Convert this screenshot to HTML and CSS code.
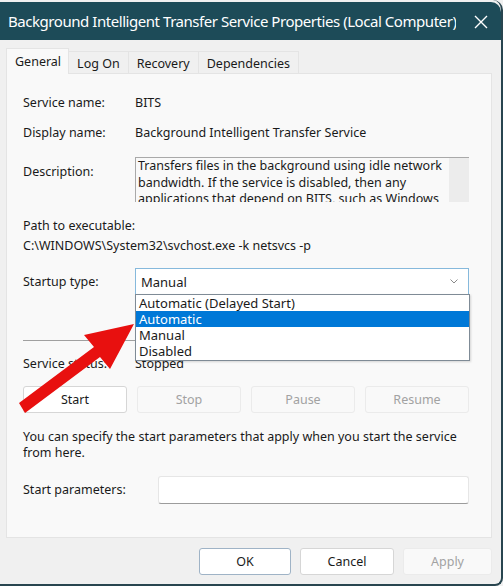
FILE: index.html
```html
<!DOCTYPE html>
<html lang="en">
<head>
    <meta charset="UTF-8">
    <title>Background Intelligent Transfer Service Properties</title>
    <link rel="stylesheet" href="styles.css">
</head>
<body>
    <div class="window">
        <div class="titlebar">
            <span class="title">Background Intelligent Transfer Service Properties (Local Computer)</span>
            <svg class="close" width="14" height="14" viewBox="0 0 14 14">
                <path d="M1 1 L13 13 M13 1 L1 13" stroke="#fff" stroke-width="1.4" fill="none"/>
            </svg>
        </div>

        <div class="content">
            <div class="tabs">
                <div class="tab active">General</div>
                <div class="tab">Log On</div>
                <div class="tab">Recovery</div>
                <div class="tab">Dependencies</div>
            </div>

            <div class="panel">
                <div class="field">
                    <span>Service name:</span>
                    <span>BITS</span>
                </div>
                <div class="field gap-14">
                    <span>Display name:</span>
                    <span>Background Intelligent Transfer Service</span>
                </div>
                <div class="field field-desc">
                    <span class="desc-label">Description:</span>
                    <div class="desc">
                        <div class="desc-text">Transfers files in the background using idle network<br>bandwidth. If the service is disabled, then any<br>applications that depend on BITS, such as Windows</div>
                        <div class="desc-scroll"></div>
                    </div>
                </div>
                <div class="path-label">Path to executable:</div>
                <div class="path-value">C:\WINDOWS\System32\svchost.exe -k netsvcs -p</div>

                <div class="field field-startup">
                    <span>Startup type:</span>
                    <div class="select">
                        <span>Manual</span>
                        <svg class="chevron" width="8" height="5" viewBox="0 0 8 5">
                            <path d="M0.5 0.5 L4 4 L7.5 0.5" stroke="#8a8a8a" stroke-width="1" fill="none"/>
                        </svg>
                        <ul class="options">
                            <li>Automatic (Delayed Start)</li>
                            <li class="selected">Automatic</li>
                            <li>Manual</li>
                            <li>Disabled</li>
                        </ul>
                    </div>
                </div>

                <div class="separator"></div>

                <div class="field gap-15">
                    <span>Service status:</span>
                    <span>Stopped</span>
                </div>

                <div class="service-buttons">
                    <button class="btn">Start</button>
                    <button class="btn" disabled>Stop</button>
                    <button class="btn" disabled>Pause</button>
                    <button class="btn" disabled>Resume</button>
                </div>

                <p class="hint">You can specify the start parameters that apply when you start the service<br>from here.</p>

                <div class="field field-params">
                    <span>Start parameters:</span>
                    <div class="text-input"></div>
                </div>
            </div>

            <div class="footer">
                <button class="btn btn-ok">OK</button>
                <button class="btn btn-cancel">Cancel</button>
                <button class="btn btn-apply" disabled>Apply</button>
            </div>
        </div>

        <svg class="arrow" width="503" height="586" viewBox="0 0 503 586">
            <polygon points="19,403 94,347 84,335 134,324 110,369 100,357 25,413" fill="#e8100f"/>
        </svg>
    </div>
</body>
</html>
```

FILE: styles.css
```css
:root {
    --title-color: #1d4b58;
    --window-bg: #f0f0f0;
    --panel-bg: #f9f9f9;
    --border-light: #e0e0e0;
    --highlight: #0078d7;
    --disabled-text: #a2a2a2;
}

body {
    margin: 0;
    background-color: var(--window-bg);
    font-family: 'Noto Sans', sans-serif;
    font-size: 12.5px;
    color: #1a1a1a;
}

.window {
    position: relative;
    width: 503px;
    height: 586px;
    box-sizing: border-box;
    padding-top: 2px;
    background-color: var(--window-bg);
    border-right: 2px solid #28454f;
    border-bottom: 2px solid #28454f;
    border-radius: 0 10px 8px 0;
    overflow: hidden;
}

.titlebar {
    height: 38px;
    display: flex;
    align-items: center;
    justify-content: space-between;
    padding: 0 13px 0 8px;
    background-color: var(--title-color);
    color: white;
    border-radius: 0 10px 0 0;
}

.title {
    min-width: 0;
    font-size: 15px;
    letter-spacing: -0.45px;
    white-space: nowrap;
    overflow: hidden;
}

.close {
    flex-shrink: 0;
    margin-top: 1px;
}

.content {
    padding: 8px 9px 0 6px;
}

.tabs {
    display: flex;
    align-items: flex-end;
    height: 25px;
}

.tab {
    height: 22px;
    box-sizing: border-box;
    padding: 2px 8px 0;
    display: flex;
    align-items: center;
    border: 1px solid #e4e4e4;
    border-bottom: none;
    border-left: none;
}

.tab.active {
    height: 26px;
    margin-bottom: -1px;
    padding: 0 7px 0 8px;
    background-color: var(--panel-bg);
    border-left: 1px solid #e4e4e4;
    position: relative;
    z-index: 1;
}

.panel {
    height: 465px;
    box-sizing: border-box;
    padding: 21px 22px 0 16px;
    background-color: var(--panel-bg);
    border: 1px solid #e4e4e4;
}

.field {
    display: grid;
    grid-template-columns: 112px 1fr;
    line-height: 16px;
}

.gap-14 { margin-top: 14px; }
.gap-15 { margin-top: 15px; }

.field-desc {
    margin-top: 16px;
    align-items: start;
}

.desc-label {
    padding-top: 7px;
}

.desc {
    height: 44px;
    display: flex;
    border-top: 1px solid #a9a9a9;
    border-left: 1px solid #a9a9a9;
    overflow: hidden;
}

.desc-text {
    flex: 1;
    padding-left: 2px;
    line-height: 16.5px;
    white-space: nowrap;
    overflow: hidden;
}

.desc-scroll {
    width: 20px;
    background-color: #ececec;
}

.path-label {
    margin-top: 16px;
    line-height: 16px;
}

.path-value {
    margin-top: 4px;
    line-height: 16px;
}

.field-startup {
    margin-top: 14px;
    align-items: center;
}

.select {
    position: relative;
    height: 27px;
    box-sizing: border-box;
    display: flex;
    align-items: center;
    justify-content: space-between;
    padding: 0 10px 0 5px;
    background-color: white;
    border: 1px solid #86b9dc;
    font-size: 13px;
}

.options {
    position: absolute;
    top: 25px;
    left: -1px;
    right: -2px;
    margin: 0;
    padding: 0 0 1px;
    list-style: none;
    background-color: white;
    border: 1px solid #7f8b96;
    box-shadow: 1px 1px 2px rgba(0,0,0,0.15);
    z-index: 2;
}

.options li {
    height: 16px;
    line-height: 16px;
    padding-left: 3px;
}

.options li.selected {
    background-color: var(--highlight);
    color: white;
}

.separator {
    margin-top: 45px;
    height: 1px;
    background-color: #a0a0a0;
}

.service-buttons {
    margin-top: 14px;
    display: grid;
    grid-template-columns: repeat(4, 1fr);
    gap: 10px;
}

.btn {
    height: 27px;
    padding: 0;
    font-family: inherit;
    font-size: 12.5px;
    color: #1a1a1a;
    background-color: white;
    border: 1px solid #d6d6d6;
    border-radius: 3px;
}

.btn:disabled {
    color: var(--disabled-text);
    background-color: #f9f9f9;
    border-color: #ebebeb;
}

.hint {
    margin: 16px 0 0;
    line-height: 16px;
}

.field-params {
    margin-top: 15px;
    grid-template-columns: 135px 1fr;
    align-items: center;
}

.text-input {
    height: 28px;
    box-sizing: border-box;
    background-color: white;
    border: 1px solid #e6e6e6;
    border-bottom-color: #9c9c9c;
    border-radius: 3px;
}

.footer {
    margin-top: 10px;
    display: flex;
    justify-content: flex-end;
    gap: 9px;
}

.btn-ok {
    width: 92px;
    border-color: #9fb3c6;
}

.btn-cancel {
    width: 94px;
}

.btn-apply {
    width: 89px;
}

.arrow {
    position: absolute;
    top: 0;
    left: 0;
    pointer-events: none;
    z-index: 3;
}
```
